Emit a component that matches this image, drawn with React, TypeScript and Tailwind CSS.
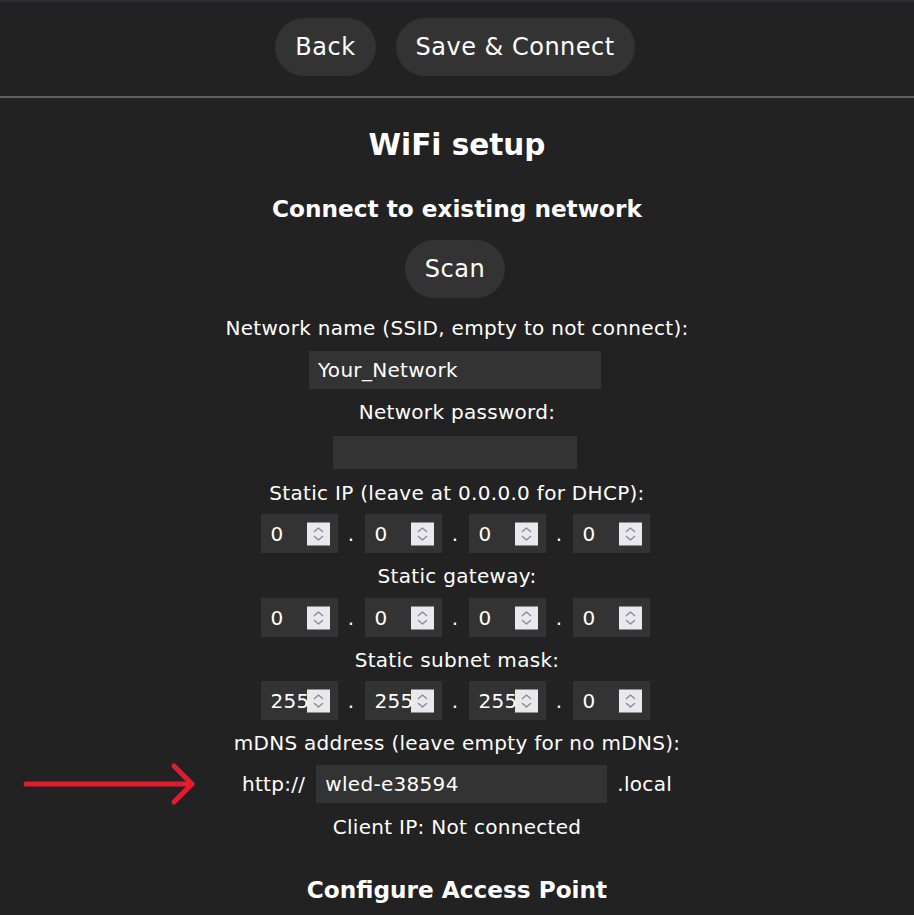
import React from 'react';

const FONT = "font-['DejaVu_Sans',Verdana,sans-serif]";

const Spinner = () => (
  <div className="absolute right-[8px] top-1/2 -translate-y-1/2 w-[23px] h-[23px] bg-[#e9e9ed] flex items-center justify-center">
    <svg width="13" height="17" viewBox="0 0 13 17" fill="none" stroke="#8f8f9d" strokeWidth="1.6" strokeLinecap="round" strokeLinejoin="round">
      <path d="M2.5 6 L6.5 2.5 L10.5 6" />
      <path d="M2.5 11 L6.5 14.5 L10.5 11" />
    </svg>
  </div>
);

const NumBox = ({ value }: { value: string }) => (
  <div className="relative w-[77px] h-[39px] bg-[#333] text-white flex items-center pl-[10px] overflow-hidden">
    <span>{value}</span>
    <Spinner />
  </div>
);

const Dot = () => <span className="w-[27px] text-center">.</span>;

const IpRow = ({ values, h }: { values: string[]; h: string }) => (
  <div className={`flex items-center justify-center pr-[4px] ${h}`}>
    <NumBox value={values[0]} />
    <Dot />
    <NumBox value={values[1]} />
    <Dot />
    <NumBox value={values[2]} />
    <Dot />
    <NumBox value={values[3]} />
  </div>
);

const Pill = ({ children }: { children: React.ReactNode }) => (
  <button className="h-[58px] px-[20px] rounded-full bg-[#333] text-white text-[24px] tracking-[0.5px] leading-none">
    {children}
  </button>
);

export default function App() {
  return (
    <div className={`${FONT} min-h-[915px] bg-[#222] text-white text-[20px] tracking-[0.3px] text-center overflow-hidden`}>
      <div className="h-[2px] bg-[#2d2d34]" />

      {/* top buttons */}
      <div className="flex justify-center gap-[20px] pt-[16px] pb-[20px] pr-[4px]">
        <Pill>Back</Pill>
        <Pill>Save &amp; Connect</Pill>
      </div>
      <div className="h-[2px] bg-[#5f5f5f]" />

      <div className="h-[94px] flex items-center justify-center text-[29.5px] font-bold tracking-normal">WiFi setup</div>
      <div className="h-[34px] flex items-center justify-center text-[23.2px] font-bold tracking-normal">Connect to existing network</div>
      <div className="h-[86px] flex items-center justify-center pr-[4px]">
        <Pill>Scan</Pill>
      </div>

      <div className="h-[32px] flex items-center justify-center">Network name (SSID, empty to not connect):</div>
      <div className="h-[52px] flex items-center justify-center pr-[4px]">
        <div className="w-[292px] h-[38px] bg-[#333] flex items-center px-[9px] text-left">Your_Network</div>
      </div>

      <div className="h-[32px] flex items-center justify-center">Network password:</div>
      <div className="h-[49px] flex items-center justify-center pr-[4px]">
        <div className="w-[244px] h-[33px] bg-[#333]" />
      </div>

      <div className="h-[32px] flex items-center justify-center">Static IP (leave at 0.0.0.0 for DHCP):</div>
      <IpRow values={['0', '0', '0', '0']} h="h-[49px]" />

      <div className="h-[36px] flex items-center justify-center">Static gateway:</div>
      <IpRow values={['0', '0', '0', '0']} h="h-[47px]" />

      <div className="h-[38px] flex items-center justify-center">Static subnet mask:</div>
      <IpRow values={['255', '255', '255', '0']} h="h-[43px]" />

      <div className="h-[42px] flex items-center justify-center">mDNS address (leave empty for no mDNS):</div>
      <div className="relative h-[40px] flex items-center justify-center">
        <span>http://</span>
        <div className="ml-[11px] mr-[10px] w-[291px] h-[38px] bg-[#333] flex items-center px-[9px] text-left">wled-e38594</div>
        <span>.local</span>

        {/* annotation arrow */}
        <svg className="absolute left-[20px] top-1/2 -translate-y-1/2" width="182" height="44" viewBox="0 0 182 44" fill="none" stroke="#e31b2e" strokeWidth="5" strokeLinecap="round" strokeLinejoin="round">
          <path d="M6 22 H172" />
          <path d="M154 4 L172 22 L154 40" />
        </svg>
      </div>

      <div className="h-[46px] flex items-center justify-center">Client IP: Not connected</div>
      <div className="h-[80px] flex items-center justify-center text-[23.2px] font-bold tracking-normal">Configure Access Point</div>
    </div>
  );
}
